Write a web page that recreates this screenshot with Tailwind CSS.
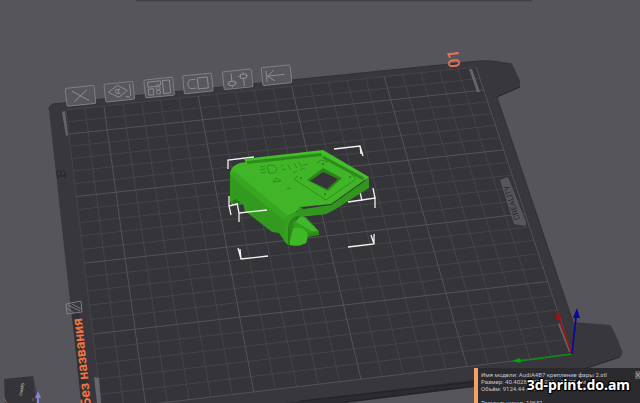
<!DOCTYPE html>
<html lang="ru">
<head>
    <meta charset="UTF-8">
    <meta name="viewport" content="width=device-width, initial-scale=1.0">
    <title>Без названия</title>
    <script src="https://cdn.jsdelivr.net/npm/@tailwindcss/browser@4"></script>
</head>
<body class="bg-[#56555b] font-['Roboto','Noto_Sans',sans-serif]">
    <main class="relative h-screen w-full overflow-hidden">
        <!-- 3D scene -->
        <svg class="block h-full w-full" viewBox="0 0 640 403" preserveAspectRatio="xMidYMid slice" aria-label="Стол принтера">
            <path d="M136 0.5H532" stroke="#414046" stroke-width="1.5"/>

            <!-- bed -->
            <path d="M49 110Q48 106 53 104L460 63Q480 60 492 61L512 64Q516 72 520 81L520 87L497 97L573 322L610 325Q613 327 622 351Q623 355 620 357L584 369L474 387L340 403H82L71 310Z" fill="#38373d"/>
            <path d="M49 110Q48 106 53 104L460 63Q480 60 492 61L512 64" fill="none" stroke="#323136"/>
            <path d="M497 97L573 322" stroke="#323137"/>
            <path d="M520 87L497 97M620 357L584 369" stroke="#252429"/>
            <path d="M286 403L474 380V387L345 403Z" fill="#2c2b30"/>
            <path d="M300 401L474 382M345 402L474 386" stroke="#222126" fill="none"/>
            <path d="M66 110L476 67L572 354L102 410Z" fill="#353439"/>
            <g fill="none">
                <path id="minor" stroke="#48474c" stroke-width="0.8"/>
                <path id="major" stroke="#57565b" stroke-width="0.9"/>
            </g>
            <path d="M62 112L65 111L68 135L66 136Z M469 69L472 69L480 92L477 92Z M94 377L99 378L101 403H97Z M558 324L560 323L571 351L569 352Z" fill="#66656a"/>
            <path d="M56 171L64 170L67 176L64 179L58 179Z" fill="#2d2c31"/>
            <path d="M59 172V175M63 172V175M59 178H64" stroke="#48474c" fill="none"/>
            <path d="M500 180L508 177L526 222L526 226L514 224Z" fill="#57565b"/>
            <text transform="translate(520 219) rotate(-108)" class="text-[8px]" fill="#29282d">CREALITY</text>

            <!-- model bounds, far side -->
            <g fill="none" stroke="#f2f2f2" stroke-width="1.3">
                <path d="M228 169V160L254 157M334 149L360 146L363 156M360 146L361 154"/>
                <path d="M348 202L375 198V208M373 188L375 198M360 192L362 201"/>
            </g>

            <!-- model: hook under the plate -->
            <path d="M291 220L306 217L319 231V235L308 237L306 243L299 246L286 244Z" fill="#2c8a1b"/>
            <path d="M293 228Q304 224 308 235L306 243Q299 247 289 245Z" fill="#3db827"/>
            <path d="M294 221L318 232L308 233L304 228L293 227Z" fill="#34a020"/>
            <path d="M299 217L303 216L318 231L312 231L296 222Z" fill="#40b82b"/>
            <!-- side wall -->
            <path d="M230 172L240 170L296 214L290 222L289 245L285 242L279 233L272 232L245 211L243 204L238 205L232 205L230 201Z" fill="#339a20"/>
            <path d="M232 201L236 199L241 203L234 205Z" fill="#267717"/>
            <!-- top face -->
            <path d="M230 173Q232 165 240 163L246 162L323 154L366 179L331 204L301 207Q296 213 291 214Q287 216 284 219L234 176Z" fill="#3fb527"/>
            <path d="M230 173L234 171L288 216L284 221L234 179Z" fill="#39a623"/>
            <path d="M284 220Q289 213 297 212L301 210L326 208V214L300 217Q291 219 290 228V245L285 242Z" fill="#36a021"/>
            <path d="M290 228Q291 219 300 217V215Q289 217 288 228V244L290 245Z" fill="#288018"/>
            <!-- front rim -->
            <path d="M300 206L303 209L331 205L369 178V188L334 210L326 214L300 216L296 214Z" fill="#31951e"/>
            <path d="M244 159L323 150L369 177L366 180L321 154L247 164Z" fill="#44bf2c"/>
            <path d="M247 161L321 153L322 156L247 164ZM324 156L365 178L362 180L322 158Z" fill="#2d8b1b"/>
            <path d="M307 180L323 168L342 178L328 191Z" fill="#2b861a"/>
            <path d="M310 181L323 172L338 179L327 189Z" fill="#35343a"/>
            <path d="M294 179L326 200L356 179L351 174M294 179L298 176" fill="none" stroke="#2c8b1b" stroke-width="0.9"/>
            <g fill="#247516">
                <circle cx="301" cy="178" r="0.9"/>
                <circle cx="350" cy="177" r="0.9"/>
                <circle cx="325" cy="194" r="0.9"/>
                <circle cx="323" cy="164" r="0.9"/>
            </g>
            <!-- engraving on the top face -->
            <g fill="none" stroke="#2c8a1b" stroke-width="0.9">
                <path d="M260 167L265 166M260 170L265 169M261 173L266 172M267 166Q274 163 277 169Q276 174 269 173Z"/>
                <path d="M281 166L283 165M282 170L286 169M288 165L291 170M294 163L297 168M298 162L302 167M303 165L308 164M300 170L305 168M317 163L321 160L328 162M273 182L276 178L281 181ZM287 189L291 188M293 173L297 171"/>
            </g>

            <!-- model bounds, near side -->
            <g fill="none" stroke="#f2f2f2" stroke-width="1.3">
                <path d="M229 196V206L231 215M229 206L237 204M237 203L239 213V222M239 213L267 210"/>
                <path d="M238 248L241 259L268 256M240 249L241 259"/>
                <path d="M348 247L374 244V234M371 235L374 244"/>
            </g>

            <!-- axes -->
            <path d="M572 354L559 319" stroke="#9b0f13" stroke-width="1.7"/>
            <path d="M557 311L556 320L562 318Z" fill="#a31015"/>
            <path d="M572 354L520 361" stroke="#089010" stroke-width="1.7"/>
            <path d="M512 361L520 358L521 363Z" fill="#08a010"/>
            <path d="M572 354L576 317" stroke="#0b0894" stroke-width="1.7"/>
            <path d="M577 308L573 318L580 318Z" fill="#0c089c"/>

            <!-- plate labels -->
            <path d="M72 313L79 312L83 345L90 403H81Z" fill="#303034"/>
            <path d="M66 304L81 301L82 312L67 314ZM68 305L80 311M72 304L81 309M67 308L74 313" fill="none" stroke="#8b8a8e" stroke-width="0.8"/>
            <text transform="translate(91 406) rotate(-96)" class="text-[14px] font-bold" fill="#ee7442">Без названия</text>
            <text transform="translate(460 67) rotate(-97)" class="text-[16px] font-medium" fill="#e97450">01</text>

            <!-- view cube -->
            <path d="M4 379L33 376L39 403H5Z" fill="#353539"/>
            <path d="M33 376L39 403H36Z" fill="#46454a"/>
            <text transform="translate(22 396) rotate(-82)" class="text-[4px]" fill="#d0d0d0">Creality</text>
            <path d="M38 391L35 398H37V403H39V398H41Z" fill="#8286d8"/>
            <path d="M4 398L7 403M33 398V401" stroke="#8a6266" fill="none"/>
        </svg>

        <!-- plate tools -->
        <nav class="absolute top-[76px] left-[65px] flex w-[227px] -rotate-6 justify-between text-[#929196]">
            <button type="button" aria-label="Удалить" class="h-[19px] w-[30px] rounded-xs border border-current/70 bg-[#58575c]">
                <svg class="h-full w-full" viewBox="0 0 28 17" fill="none" stroke="currentColor" stroke-width="0.9"><path d="M6 3L22 14M21 3L7 14"/></svg>
            </button>
            <button type="button" aria-label="Ориентация" class="h-[19px] w-[30px] rounded-xs border border-current/70 bg-[#58575c]">
                <svg class="h-full w-full" viewBox="0 0 28 17" fill="none" stroke="currentColor" stroke-width="0.9"><path d="M3 8L13 2L22 8L13 14ZM15 6H11Q9 8 11 10H15M13 6V10M25 2V14M20 14L24 15"/></svg>
            </button>
            <button type="button" aria-label="Расстановка" class="h-[19px] w-[30px] rounded-xs border border-current/70 bg-[#58575c]">
                <svg class="h-full w-full" viewBox="0 0 28 17" fill="none" stroke="currentColor" stroke-width="0.9"><path d="M3 2H16V6H12L10 7H3ZM3 9H8V15H3ZM18 2H25V15H18Z"/><circle cx="13" cy="9" r="2"/><circle cx="13" cy="13" r="2"/></svg>
            </button>
            <button type="button" aria-label="Блокировка" class="h-[19px] w-[30px] rounded-xs border border-current/70 bg-[#58575c]">
                <svg class="h-full w-full" viewBox="0 0 28 17" fill="none" stroke="currentColor" stroke-width="0.9"><path d="M12 4H8Q4 4 4 8.500Q4 13 8 13H12M14 3H24V14H14Z"/></svg>
            </button>
            <button type="button" aria-label="Настройки" class="h-[19px] w-[30px] rounded-xs border border-current/70 bg-[#58575c]">
                <svg class="h-full w-full" viewBox="0 0 28 17" fill="none" stroke="currentColor" stroke-width="0.9"><path d="M8 2V10M8 14V16M5 10H11V14H5ZM5 12H3M11 12H13M20 2V4M20 8V16M17 4H23V8H17ZM17 6H15M23 6H25"/></svg>
            </button>
            <button type="button" aria-label="Сдвинуть" class="h-[19px] w-[30px] rounded-xs border border-current/70 bg-[#58575c]">
                <svg class="h-full w-full" viewBox="0 0 28 17" fill="none" stroke="currentColor" stroke-width="0.9"><path d="M4 3V14M12 3L5 8.500L12 14M5 8.500H22"/></svg>
            </button>
        </nav>

        <!-- model info -->
        <section class="absolute right-0 bottom-0 flex h-[35px] w-[166px] items-start overflow-hidden border-l-4 border-[#f5a066] bg-[#2b2a2e] pt-[3px] pl-[3px] text-[6px] leading-[7px] whitespace-nowrap text-[#c4c4c6]">
            <div class="grow">
                <p>Имя модели: AudiA4B7 крепление фары 2.stl</p>
                <p>Размер: 40.4028 x 30.0266 x 27.77 мм</p>
                <p>Объём: 9124.44 мм³</p>
                <p class="mt-[7px]">Треугольников: 10651</p>
            </div>
            <button type="button" aria-label="Закрыть" class="h-2 w-[5px] shrink-0 bg-[#5a595e]">
                <svg class="h-full w-full" viewBox="0 0 5 8" stroke="#a5a4a8" stroke-width="0.8"><path d="M1 2L5 6M5 2L1 6"/></svg>
            </button>
        </section>
        <p class="absolute right-[10px] bottom-[8px] font-['Noto_Sans',sans-serif] text-[14px] leading-5 font-bold text-white [text-shadow:1px_0_1px_#000,-1px_0_1px_#000,0_1px_1px_#000,0_-1px_1px_#000,1px_1px_1px_#000,-1px_-1px_1px_#000]">3d-print.do.am</p>
    </main>

    <script>
        // 220 x 220 mm bed, one cell = 10 mm, origin at the axes
        const CELLS = 22;
        const [p0, p1, p2, p3] = [[572, 354], [102, 410], [66, 110], [476, 67]];

        // unit square -> screen quad
        const sx = p0[0] - p1[0] + p2[0] - p3[0], sy = p0[1] - p1[1] + p2[1] - p3[1];
        const dx1 = p1[0] - p2[0], dx2 = p3[0] - p2[0];
        const dy1 = p1[1] - p2[1], dy2 = p3[1] - p2[1];
        const det = dx1 * dy2 - dx2 * dy1;
        const g = (sx * dy2 - dx2 * sy) / det;
        const h = (dx1 * sy - sx * dy1) / det;

        function project(u, v) {
            u /= CELLS;
            v /= CELLS;
            const w = g * u + h * v + 1;
            const x = (p1[0] - p0[0] + g * p1[0]) * u + (p3[0] - p0[0] + h * p3[0]) * v + p0[0];
            const y = (p1[1] - p0[1] + g * p1[1]) * u + (p3[1] - p0[1] + h * p3[1]) * v + p0[1];
            return `${(x / w).toFixed(1)} ${(y / w).toFixed(1)}`;
        }

        const paths = { minor: '', major: '' };
        for (let i = 0; i <= CELLS; i++) {
            const kind = i % 5 === 0 ? 'major' : 'minor';
            paths[kind] += `M${project(i, 0)}L${project(i, CELLS)}M${project(0, i)}L${project(CELLS, i)}`;
        }
        document.getElementById('minor').setAttribute('d', paths.minor);
        document.getElementById('major').setAttribute('d', paths.major);
    </script>
</body>
</html>
